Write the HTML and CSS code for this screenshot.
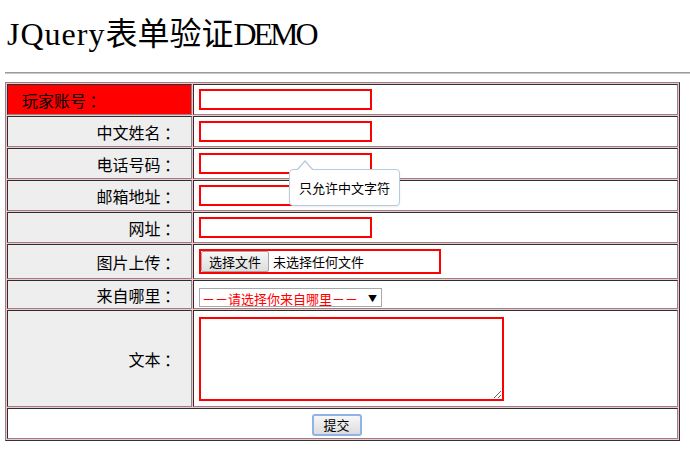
FILE: index.html
```html
<!DOCTYPE html>
<html lang="zh-CN">
<head>
    <meta charset="UTF-8">
    <title>JQuery表单验证DEMO</title>
    <link rel="stylesheet" href="styles.css">
</head>
<body>
    <h1><span class="en">JQuery</span>表单验证<span class="en en-caps">DEMO</span></h1>
    <hr>

    <form id="demoForm">
        <table class="form-table">
            <tr class="row">
                <td class="label error">玩家账号 ：</td>
                <td class="field"><input type="text" class="txt" name="account"></td>
            </tr>
            <tr class="row">
                <td class="label">中文姓名 ：</td>
                <td class="field"><input type="text" class="txt" name="cnname"></td>
            </tr>
            <tr class="row">
                <td class="label">电话号码 ：</td>
                <td class="field"><input type="text" class="txt" name="phone"></td>
            </tr>
            <tr class="row">
                <td class="label">邮箱地址 ：</td>
                <td class="field"><input type="text" class="txt" name="email"></td>
            </tr>
            <tr class="row">
                <td class="label">网址 ：</td>
                <td class="field"><input type="text" class="txt" name="url"></td>
            </tr>
            <tr class="row row-file">
                <td class="label">图片上传 ：</td>
                <td class="field">
                    <div class="file-box">
                        <span class="file-btn">选择文件</span>
                        <span class="file-name">未选择任何文件</span>
                    </div>
                </td>
            </tr>
            <tr class="row row-select">
                <td class="label">来自哪里 ：</td>
                <td class="field">
                    <span class="select-wrap">
                        <select class="from" name="from">
                            <option>－－请选择你来自哪里－－</option>
                        </select>
                    </span>
                </td>
            </tr>
            <tr class="row row-text">
                <td class="label">文本 ：</td>
                <td class="field"><textarea class="area" name="content"></textarea></td>
            </tr>
            <tr class="row">
                <td class="submit-cell" colspan="2"><button type="button" class="submit">提交</button></td>
            </tr>
        </table>
    </form>

    <!-- Fehlermeldung zum Namensfeld -->
    <div class="tip">只允许中文字符</div>
</body>
</html>
```

FILE: styles.css
```css
body {
    margin: 0 0 0 5px;
    background-color: #fff;
    color: #000;
    font-family: "Noto Sans CJK SC", sans-serif;
    font-size: 16px;
}

h1 {
    margin: 0;
    padding: 14px 0 0 2px;
    height: 40px;
    line-height: 40px;
    font-family: "Liberation Serif", "Noto Sans CJK SC", serif;
    font-size: 32px;
    font-weight: normal;
    white-space: nowrap;
}

h1 .en {
    letter-spacing: 1px;
}

h1 .en-caps {
    letter-spacing: -3px;
}

hr {
    margin: 18px 0 8px;
    height: 0;
    border: none;
    border-top: 1px solid #9a9a9a;
    border-bottom: 1px solid #c8c8c8;
}

.form-table {
    width: 675px;
    border-collapse: separate;
    border-spacing: 1px;
    border: 1px solid;
    border-color: #888 #333 #333 #888;
    background-color: #ffc0cb;
}

.form-table td {
    box-sizing: border-box;
    height: 31px;
    padding: 0 5px;
    border: 1px solid;
    border-color: #2e2e2e #888 #888 #2e2e2e;
    background-color: #fff;
    vertical-align: middle;
}

.form-table td.label {
    width: 185px;
    padding-right: 11px;
    text-align: right;
    background-color: #eee;
}

.form-table td.error {
    padding-left: 14px;
    text-align: left;
    background-color: #f00;
}

.row-file td {
    height: 35px !important;
}

.row-select td {
    height: 29px !important;
}

.row-text td {
    height: 97px !important;
}

.txt {
    box-sizing: border-box;
    display: block;
    width: 173px;
    height: 21px;
    margin: 0;
    padding: 0 3px;
    border: 2px solid #f00;
    outline: none;
}

.file-box {
    box-sizing: border-box;
    display: flex;
    align-items: center;
    width: 242px;
    height: 25px;
    border: 2px solid #f00;
    font-size: 13px;
}

.file-btn {
    box-sizing: border-box;
    height: 21px;
    padding: 0 7px;
    line-height: 19px;
    border: 1px solid #a6a6a6;
    border-radius: 2px;
    background: linear-gradient(#f6f6f6, #dedede);
}

.file-name {
    margin-left: 4px;
}

.select-wrap {
    position: relative;
    display: inline-block;
    vertical-align: middle;
}

.select-wrap::after {
    content: "▼";
    position: absolute;
    right: 5px;
    top: 4px;
    font-size: 9px;
    color: #000;
    pointer-events: none;
}

.from {
    box-sizing: border-box;
    display: block;
    width: 183px;
    height: 19px;
    margin: 0;
    padding: 0 0 0 2px;
    border: 1px solid #a9a9a9;
    border-radius: 0;
    background-color: #fff;
    color: #f00;
    font-family: "Noto Sans CJK SC", sans-serif;
    font-size: 13px;
    -webkit-appearance: none;
    appearance: none;
}

.area {
    box-sizing: border-box;
    display: block;
    width: 305px;
    height: 84px;
    margin: 0;
    border: 2px solid #f00;
    outline: none;
}

.submit-cell {
    padding-right: 17px !important;
    text-align: center;
}

.submit {
    box-sizing: border-box;
    width: 50px;
    height: 22px;
    padding: 0;
    border: 2px solid #8fb3e6;
    border-radius: 3px;
    background: linear-gradient(#f7f7f7, #dcdcdc);
    font-family: "Noto Sans CJK SC", sans-serif;
    font-size: 13px;
    line-height: 18px;
    vertical-align: middle;
}

/* Tooltip mit Pfeil nach oben */
.tip {
    position: absolute;
    left: 289px;
    top: 169px;
    box-sizing: border-box;
    width: 111px;
    height: 37px;
    border: 1px solid #b7cbde;
    border-radius: 4px;
    background-color: #fff;
    font-size: 13px;
    line-height: 35px;
    text-align: center;
    box-shadow: 0 1px 2px rgba(0, 0, 0, 0.08);
}

.tip::before,
.tip::after {
    content: "";
    position: absolute;
    width: 0;
    height: 0;
    border-style: solid;
}

.tip::before {
    left: 6px;
    top: -10px;
    border-width: 0 9px 10px 9px;
    border-color: transparent transparent #b7cbde transparent;
}

.tip::after {
    left: 7px;
    top: -8px;
    border-width: 0 8px 9px 8px;
    border-color: transparent transparent #fff transparent;
}
```
